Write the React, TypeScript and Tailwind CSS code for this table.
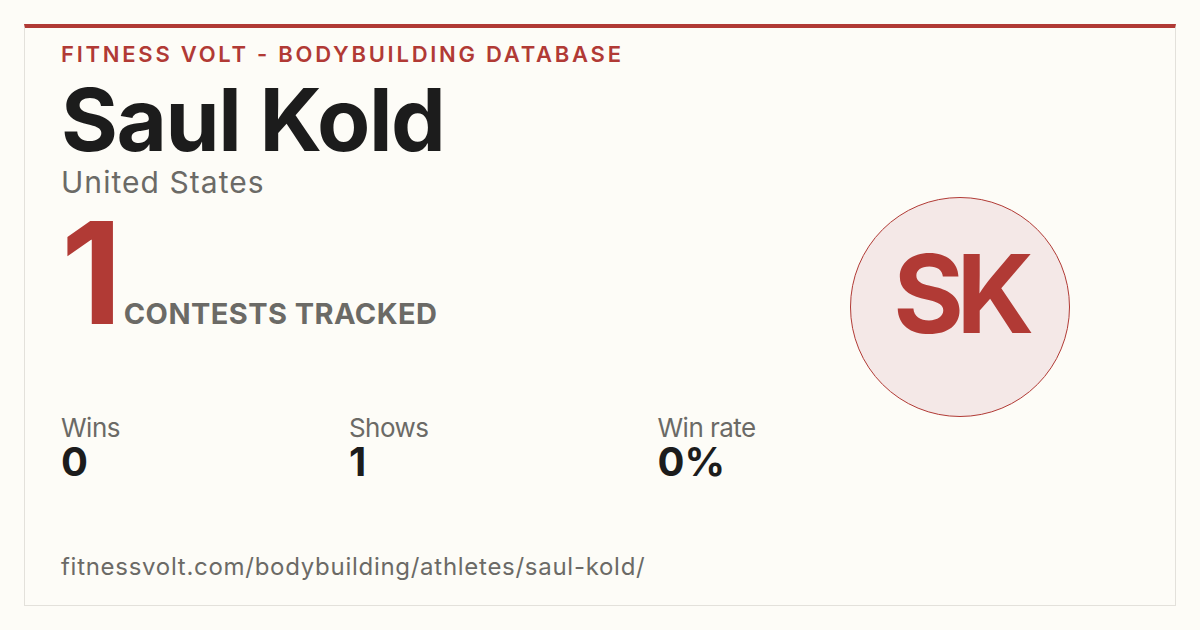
const stats = [
  { label: 'Wins', value: '0' },
  { label: 'Shows', value: '1' },
  { label: 'Win rate', value: '0%' },
]

export default function App() {
  return (
    <div
      className="h-[630px] w-[1200px] bg-[#fdfcf7] p-6"
      style={{ fontFamily: 'Inter, "Noto Sans", sans-serif' }}
    >
      <div className="flex h-full border border-t-4 border-[#e3e1db] border-t-[#b13a35]">
        <div className="flex flex-1 flex-col pl-9 pt-[15px]">
          <p className="text-[22px] font-semibold uppercase leading-none tracking-[0.125em] text-[#b13a35]">
            Fitness Volt - Bodybuilding Database
          </p>
          <h1 className="mt-[11px] text-[87px] font-bold leading-none tracking-[-0.017em] text-[#1c1c1c]">
            Saul Kold
          </h1>
          <p className="mt-[4px] text-[30px] leading-none tracking-[0.035em] text-[#6b6a66]">
            United States
          </p>
          <div className="mt-[4px] flex items-baseline">
            <span className="text-[142px] font-bold leading-none tracking-[-0.06em] text-[#b13a35]">
              1
            </span>
            <span className="ml-[10px] text-[29px] font-bold uppercase leading-none tracking-[0.015em] text-[#6b6a66]">
              Contests tracked
            </span>
          </div>
          <div className="mt-[70px] flex gap-[229px]">
            {stats.map((s) => (
              <div key={s.label} className="flex flex-col">
                <span className="text-[26px] leading-[30px] tracking-[-0.02em] text-[#6b6a66]">
                  {s.label}
                </span>
                <span className="text-[40px] font-bold leading-[38px] text-[#1c1c1c]">
                  {s.value}
                </span>
              </div>
            ))}
          </div>
          <p className="mt-auto mb-[26px] text-[24px] leading-none tracking-[0.03em] text-[#6b6a66]">
            fitnessvolt.com/bodybuilding/athletes/saul-kold/
          </p>
        </div>
        <div className="pr-[105px] pt-[169px]">
          <div className="flex h-[220px] w-[220px] items-center justify-center rounded-full border-[1.5px] border-[#b13a35] bg-[#f4e8e7] pb-[27px]">
            <span className="text-[108px] font-bold leading-none tracking-[-0.07em] text-[#b13a35]">
              SK
            </span>
          </div>
        </div>
      </div>
    </div>
  )
}
